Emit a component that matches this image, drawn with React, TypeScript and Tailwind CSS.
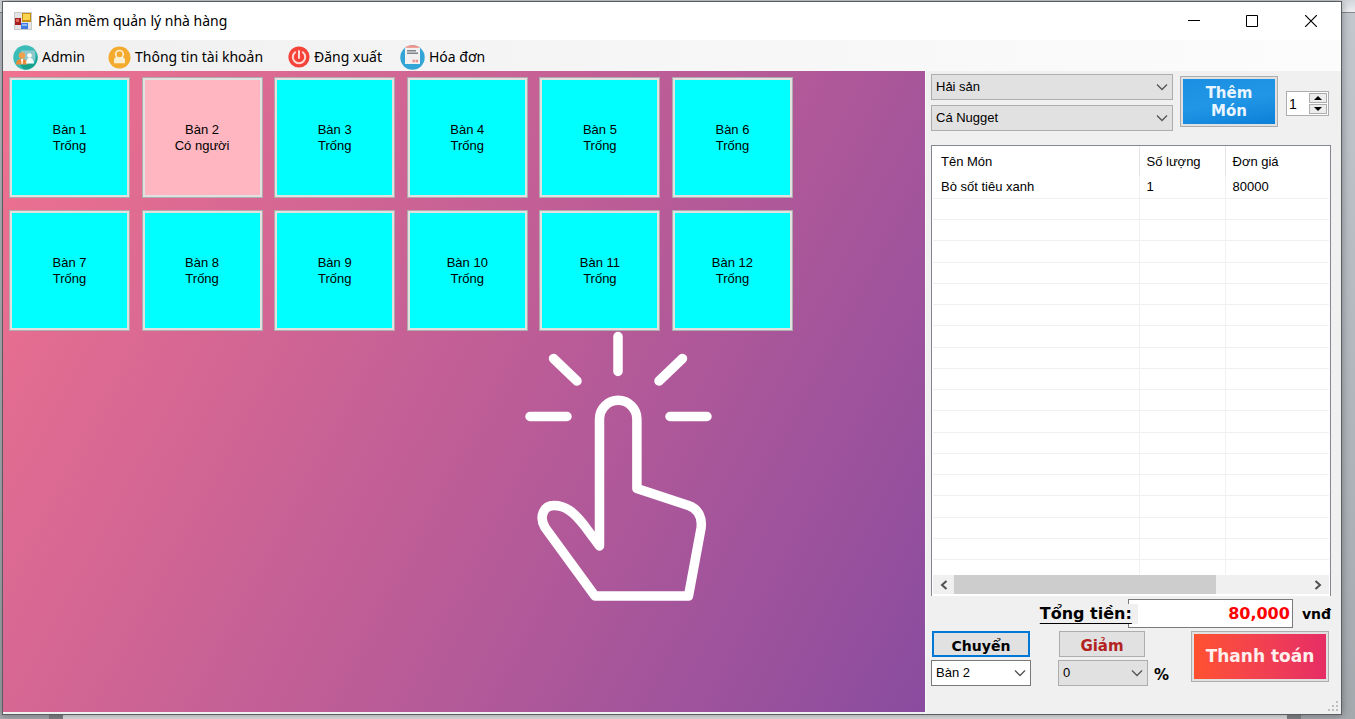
import React, { useState } from 'react';

const UI = 'font-["Liberation_Sans",Arial,sans-serif]';

const tables = Array.from({ length: 12 }, (_, i) => ({ id: i + 1, busy: i === 1 }));
const blankRows = Array.from({ length: 17 }, (_, i) => i);

function AppIcon() {
  return (
    <svg width="18" height="18" viewBox="0 0 18 18" aria-hidden="true">
      <rect x="0.5" y="0.5" width="17" height="17" fill="#e4e4e4" stroke="#c9c9c9" />
      <rect x="1" y="6" width="6" height="7" fill="#a81f1f" />
      <rect x="2" y="7" width="3" height="3" fill="#e06a5a" />
      <rect x="8" y="1" width="9" height="9" fill="#c98f12" />
      <rect x="9" y="2" width="7" height="6" fill="#fbd450" />
      <rect x="7" y="11" width="7" height="6" fill="#3f7be0" />
      <rect x="8" y="12" width="5" height="2" fill="#8fb8f5" />
    </svg>
  );
}

function AdminIcon() {
  return (
    <svg width="25" height="25" viewBox="0 0 25 25" aria-hidden="true">
      <circle cx="12.5" cy="12.5" r="12.2" fill="#3bbcb8" />
      <path d="M24 9a12.2 12.2 0 0 1-13 15.5l-4-4.500 15-2z" fill="#17a08a" />
      <rect x="8" y="5.500" width="14" height="10" rx="1" fill="#8fc9cd" />
      <circle cx="9" cy="10.500" r="3.200" fill="#f0a04b" />
      <path d="M3 19.500c0-4 2-5.500 6-5.500s5.500 1.500 5.500 5.500z" fill="#ea8b3a" />
      <path d="M8 14h2.200l-.6 5h-1z" fill="#fff" />
      <circle cx="16.500" cy="10.500" r="2.300" fill="#fff" />
      <path d="M13 18.500c0-3.500 1.300-5.500 3.500-5.500 2.400 0 4.500 2 4.500 5.500z" fill="#f4fbfa" />
    </svg>
  );
}

function UserIcon() {
  return (
    <svg width="23" height="23" viewBox="0 0 23 23" aria-hidden="true">
      <circle cx="11.500" cy="11.500" r="11" fill="#f4ab2d" />
      <path d="M6 17.300v-3.300c0-2 1.500-3 3.200-3h4.600c1.700 0 3.200 1 3.200 3v3.300z" fill="#fdeed0" />
      <circle cx="11.500" cy="8.300" r="3.800" fill="#f4ab2d" stroke="#fdf0d5" strokeWidth="1.600" />
    </svg>
  );
}

function PowerIcon() {
  return (
    <svg width="22" height="22" viewBox="0 0 22 22" aria-hidden="true">
      <circle cx="11" cy="11" r="10.600" fill="#f5433a" />
      <path d="M7.200 6.200a6.200 6.200 0 1 0 7.600 0M11 5v7" fill="none" stroke="#ffd9d5" strokeWidth="2" strokeLinecap="round" />
    </svg>
  );
}

function BillIcon() {
  return (
    <svg width="25" height="25" viewBox="0 0 25 25" aria-hidden="true">
      <circle cx="12.500" cy="12.500" r="12.200" fill="#32a5d6" />
      <path d="M5 3v-.4a12.200 12.200 0 0 1 15 0V3z" fill="#ef8f85" />
      <path d="M5 2.500h15V19H5z" fill="#f1efef" />
      <path d="M6.500 2h12" stroke="#ef9a90" strokeWidth="1.600" />
      <path d="M7 5.800h9M7 8.200h11" stroke="#7f848b" strokeWidth="1.400" />
      <path d="M12.500 16h2.200M15.500 16h2.500" stroke="#e98d88" strokeWidth="2.600" />
    </svg>
  );
}

function Chevron() {
  return (
    <svg className="pointer-events-none absolute right-1 top-1/2 -translate-y-1/2" width="14" height="8" viewBox="0 0 14 8" aria-hidden="true">
      <path d="M2 1.500 7 6.500 12 1.500" fill="none" stroke="#555" strokeWidth="1.300" />
    </svg>
  );
}

function Combo({ label, options, boxClass }: { label: string; options: string[]; boxClass: string }) {
  return (
    <div className="relative w-full">
      <select
        aria-label={label}
        className={`block h-[26px] w-full appearance-none border pl-1 pr-5 text-[13px] leading-5 text-black ${boxClass}`}
      >
        {options.map((o) => (
          <option key={o}>{o}</option>
        ))}
      </select>
      <Chevron />
    </div>
  );
}

function ClickHand() {
  return (
    <svg
      className="pointer-events-none absolute left-[522px] top-[260px]"
      width="190"
      height="272"
      viewBox="525 331 190 272"
      fill="none"
      stroke="#fff"
      strokeWidth="9.500"
      strokeLinecap="round"
      strokeLinejoin="round"
      aria-hidden="true"
    >
      <path d="M618 336.500v35M553.500 358.500l23.500 22.500M682.500 358.500 659 381M530 416.500h37M670 416.500h37" />
      <path d="M599.500 546V419a18.700 18.700 0 0 1 37.400 0v69.500l51.600 17c10 3.500 14 12 12.500 23l-12.500 67.500H595l-50-68.500c-6-10-2-22 9-22 11.500 0 20 7 29.500 19z" />
    </svg>
  );
}

const menu = [
  { label: 'Admin', icon: <AdminIcon />, cls: 'w-[95px]' },
  { label: 'Thông tin tài khoản', icon: <UserIcon />, cls: 'w-[180px]' },
  { label: 'Đăng xuất', icon: <PowerIcon />, cls: 'w-[112px]' },
  { label: 'Hóa đơn', icon: <BillIcon />, cls: '' },
];

export default function App() {
  const [qty, setQty] = useState(1);
  return (
    <div className={`relative flex min-h-screen flex-col bg-linear-to-b from-[#c3c7ce] to-[#a4a9ae] pb-1 pl-[2px] pr-[13px] pt-px text-[13px] text-black ${UI}`}>
      <div className="absolute inset-x-0 top-0 h-[13px] border-b border-[#85888d] bg-linear-to-b from-[#d3d6da] to-[#eceef1]" />
      <div className="absolute inset-x-0 bottom-0 mr-[54px] ml-[49px] h-1 border-x-[14px] border-[#808387] bg-[#dcdddf]" />

      <div className="relative flex flex-1 flex-col border border-[#5b5e60] bg-[#f0f0f0] shadow-[0_0_8px_rgba(0,0,0,0.35)]">
        <header className="flex h-[38px] shrink-0 items-center bg-white pl-[11px] font-['Noto_Sans',sans-serif]">
          <AppIcon />
          <h1 className="flex-1 pl-[6px] text-sm">Phần mềm quản lý nhà hàng</h1>
          <button aria-label="Minimize" className="flex h-full w-[58px] items-center justify-center">
            <svg width="12" height="12" viewBox="0 0 12 12"><path d="M0 5.500h12" stroke="#000" /></svg>
          </button>
          <button aria-label="Maximize" className="flex h-full w-[58px] items-center justify-center">
            <svg width="12" height="12" viewBox="0 0 12 12"><path d="M.5.5h11v11H.5z" fill="none" stroke="#000" /></svg>
          </button>
          <button aria-label="Close" className="flex h-full w-[60px] items-center justify-center">
            <svg width="12" height="12" viewBox="0 0 12 12"><path d="m0 0 12 12M12 0 0 12" stroke="#000" strokeWidth="1.200" /></svg>
          </button>
        </header>

        <nav className="flex h-[31px] shrink-0 items-center bg-linear-to-r from-[#f0f0f0] to-[#fcfcfc] pl-[10px] pt-[3px] font-['Noto_Sans',sans-serif]">
          {menu.map((m) => (
            <button key={m.label} className={`flex items-center gap-1 whitespace-nowrap text-sm ${m.cls}`}>
              {m.icon}
              {m.label}
            </button>
          ))}
        </nav>

        <div className="flex flex-1">
          <main className="relative mb-[2px] flex-1 bg-linear-[118deg] from-[#f0728f] via-[#bb5c97] via-55% to-[#8a4c9f]">
            <ClickHand />
            <div className="relative ml-[6px] grid max-w-[784px] grid-cols-[repeat(6,121px)] justify-between gap-y-3 pt-[6px]">
              {tables.map((t) => (
                <button key={t.id} className="size-[121px] border border-[#adadad] bg-[#e1e1e1] p-[2px] leading-4">
                  <span className={`flex size-full flex-col items-center justify-center ${t.busy ? 'bg-[#ffb6c1]' : 'bg-[#00ffff]'}`}>
                    <span>Bàn {t.id}</span>
                    <span>{t.busy ? 'Có người' : 'Trống'}</span>
                  </span>
                </button>
              ))}
            </div>
          </main>

          <aside className="flex w-[416px] shrink-0 flex-col border-l border-[#fafafa] pl-[5px] pr-[10px] pt-[3px]">
            <div className="flex">
              <div className="flex w-[242px] flex-col gap-[5px]">
                <Combo label="Danh mục" options={['Hải sản']} boxClass="border-[#adadad] bg-[#e1e1e1]" />
                <Combo label="Món" options={['Cá Nugget']} boxClass="border-[#adadad] bg-[#e1e1e1]" />
              </div>
              <button className="mt-[2px] ml-[7px] h-[51px] w-[98px] border border-[#adadad] bg-[#e1e1e1] p-[2px] font-['DejaVu_Sans',Verdana,sans-serif] text-[15px] leading-[18px] font-bold text-[#eaf6ff]">
                <span className="flex size-full items-center justify-center bg-linear-170 from-[#1b8fe2] via-[#2196e6] to-[#0a80d8] px-4">Thêm Món</span>
              </button>
              <div className="mt-[17px] ml-2 flex h-[25px] w-[43px] border border-[#abadb3] bg-white p-px">
                <input aria-label="Số lượng" className="w-[21px] min-w-0 pl-px text-sm leading-5 outline-none" value={qty} onChange={(e) => setQty(Number(e.target.value) || 0)} />
                <div className="flex w-[18px] flex-col gap-px">
                  <button aria-label="Tăng" onClick={() => setQty(qty + 1)} className="flex flex-1 items-center justify-center border border-[#adadad] bg-[#ececec]">
                    <svg width="8" height="4" viewBox="0 0 8 4"><path d="M4 0l4 4H0z" /></svg>
                  </button>
                  <button aria-label="Giảm số lượng" onClick={() => setQty(Math.max(0, qty - 1))} className="flex flex-1 items-center justify-center border border-[#adadad] bg-[#ececec]">
                    <svg width="8" height="4" viewBox="0 0 8 4"><path d="M4 4l4-4H0z" /></svg>
                  </button>
                </div>
              </div>
            </div>

            <div className="mt-[14px] flex h-[451px] w-[400px] flex-col border border-b-0 border-[#828790] bg-white px-px">
              <table className="h-[428px] w-full table-fixed border-collapse text-left">
                <colgroup>
                  <col className="w-[206px]" />
                  <col className="w-[86px]" />
                  <col />
                </colgroup>
                <thead>
                  <tr className="h-[31px] leading-4">
                    <th className="border-r border-[#e5e5e5] pl-2 font-normal">Tên Món</th>
                    <th className="border-r border-[#e5e5e5] pl-[7px] font-normal">Số lượng</th>
                    <th className="pl-[7px] font-normal">Đơn giá</th>
                  </tr>
                </thead>
                <tbody>
                  <tr className="h-[21px] border-b border-[#f0f0f0] leading-4">
                    <td className="border-r border-[#f0f0f0] pl-2">Bò sốt tiêu xanh</td>
                    <td className="border-r border-[#f0f0f0] pl-[7px]">1</td>
                    <td className="pl-[7px]">80000</td>
                  </tr>
                  {blankRows.map((r) => (
                    <tr key={r} className="h-[21px] border-b border-[#f0f0f0]">
                      <td className="border-r border-[#f0f0f0]" />
                      <td className="border-r border-[#f0f0f0]" />
                      <td />
                    </tr>
                  ))}
                  <tr className="h-[14px]">
                    <td className="border-r border-[#f0f0f0]" />
                    <td className="border-r border-[#f0f0f0]" />
                    <td />
                  </tr>
                </tbody>
              </table>
              <div className="mt-auto mb-[2px] flex h-[19px] shrink-0 items-center bg-[#f0f0f0]">
                <button aria-label="Cuộn trái" className="flex w-[21px] justify-center">
                  <svg width="8" height="10" viewBox="0 0 8 10"><path d="M6.500 1 2 5l4.500 4" fill="none" stroke="#505050" strokeWidth="2" /></svg>
                </button>
                <div className="h-full w-[262px] bg-[#cdcdcd]" />
                <button aria-label="Cuộn phải" className="ml-auto flex w-[22px] justify-center">
                  <svg width="8" height="10" viewBox="0 0 8 10"><path d="M1.500 1 6 5 1.500 9" fill="none" stroke="#505050" strokeWidth="2" /></svg>
                </button>
              </div>
            </div>

            <div className="mt-[3px] flex items-center justify-end font-['DejaVu_Sans',Verdana,sans-serif] font-bold">
              <label htmlFor="total" className="z-10 -mr-[10px] bg-[#f0f0f0] pr-[6px] text-base leading-5 underline underline-offset-4">Tổng tiền:</label>
              <input id="total" readOnly value="80,000" className="h-[29px] w-[165px] border border-[#7a7a7a] bg-white pr-[2px] text-right text-base text-[#ff0000] outline-none" />
              <span className="pl-[9px] text-sm">vnđ</span>
            </div>

            <div className="mt-[3px] flex items-start">
              <div className="flex w-[100px] flex-col gap-[3px]">
                <button className="ml-px h-[26px] w-[98px] border-2 border-[#0078d7] bg-[#e1e1e1] pt-1 font-['DejaVu_Sans',Verdana,sans-serif] text-sm leading-4 font-bold">Chuyển</button>
                <Combo label="Chuyển bàn" options={['Bàn 2']} boxClass="border-[#7a7a7a] bg-white" />
              </div>
              <div className="ml-[27px] flex w-[90px] flex-col gap-[3px]">
                <button className="ml-px h-[26px] w-[86px] border border-[#adadad] bg-[#e1e1e1] pt-1 font-['DejaVu_Sans',Verdana,sans-serif] text-[15px] leading-4 font-bold text-[#b22222]">Giảm</button>
                <Combo label="Giảm giá" options={['0']} boxClass="border-[#adadad] bg-[#e1e1e1]" />
              </div>
              <span className="mt-[34px] ml-[6px] font-['DejaVu_Sans',Verdana,sans-serif] text-[15px] leading-5 font-bold">%</span>
              <button className="ml-auto mr-[2px] h-[51px] w-[138px] border border-[#adadad] bg-[#e1e1e1] p-[2px] font-['DejaVu_Sans',Verdana,sans-serif] text-[17px] font-bold text-[#fff0ee]">
                <span className="flex size-full items-center justify-center whitespace-nowrap bg-linear-to-r from-[#ff512f] to-[#e62d65]">Thanh toán</span>
              </button>
            </div>
          </aside>
        </div>
        <svg className="absolute right-[2px] bottom-[2px]" width="11" height="11" viewBox="0 0 11 11" fill="#bfbfbf" aria-hidden="true">
          <path d="M8 0h2v2H8zM8 4h2v2H8zM8 8h2v2H8zM4 4h2v2H4zM4 8h2v2H4zM0 8h2v2H0z" />
        </svg>
      </div>
    </div>
  );
}
